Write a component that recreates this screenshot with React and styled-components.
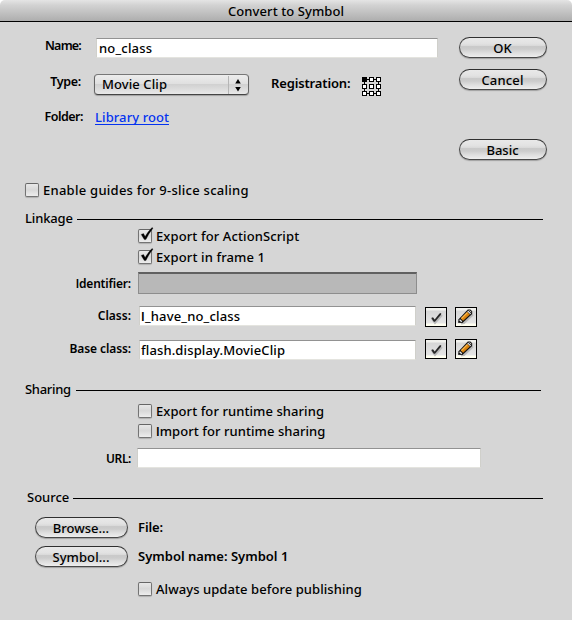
import React from 'react';
import styled, { createGlobalStyle } from 'styled-components';

const Global = createGlobalStyle`
  *, *::before, *::after { box-sizing: border-box; }
  body { margin: 0; background: #d6d6d6; }
`;

const Dialog = styled.main`
  width: 572px;
  height: 620px;
  overflow: hidden;
  background: #d6d6d6;
  color: #000;
  font-family: "Noto Sans", sans-serif;
  font-size: 13px;
  font-weight: 500;
  line-height: 16px;
`;

const TitleBar = styled.header`
  height: 22px;
  padding: 3px 0 0 228px;
  border-bottom: 1px solid #000;
  border-radius: 5px 5px 0 0;
  background: linear-gradient(#e4e4e4 0, #d2d2d2 25%, #c6c6c6 50%, #bababa 75%, #adadad 100%);
`;

const Corners = styled.div`
  background: #fff;
`;

const Text = styled.span`
  display: block;
  flex: none;
  white-space: nowrap;
  letter-spacing: ${p => p.$track || 0}px;
`;

const Stem = styled.span`
  font-family: Roboto, sans-serif;
  font-weight: 500;
`;

const Row = styled.div`
  display: flex;
  align-items: flex-start;
  height: ${p => p.$height}px;
  padding-left: ${p => p.$indent || 0}px;
`;

const TopArea = styled.section`
  display: grid;
  grid-template-columns: 459px 88px;
  height: 160px;
  padding-top: 15px;
`;

const Label = styled(Text)`
  width: ${p => p.$width}px;
  margin: ${p => p.$drop || 0}px ${p => p.$gap || 8}px 0 0;
  text-align: right;
  font-size: ${p => p.$size || 12}px;
  font-weight: 600;
`;

const Field = styled.div`
  flex: none;
  width: ${p => p.$width}px;
  height: 20px;
  margin-top: ${p => p.$drop || 0}px;
  padding: 1px 0 0 ${p => p.$inset || 1}px;
  border: 1px solid #d0d0cb;
  border-top-color: #929292;
  border-bottom-color: #e4e4df;
  background: #fff;
`;

const DisabledField = styled(Field)`
  height: 22px;
  border: 1px solid #8d8d8d;
  border-top: 2px solid #606060;
  background: #b8b8b8;
`;

const Select = styled.div`
  display: flex;
  flex: none;
  justify-content: space-between;
  width: 155px;
  height: 21px;
  padding: 1px 0 0 7px;
  border: 1px solid #666;
  border-top-color: #777;
  border-bottom-color: #444;
  border-radius: 4px;
  background: linear-gradient(#ededed 0, #e0e0e0 45%, #d1d1d1 50%, #e8e8e8 100%);
  box-shadow: 0 1px 1px rgba(0, 0, 0, 0.25);
`;

const Stepper = styled.div`
  width: 20px;
  height: 18px;
  border-left: 1px solid #b5b5b5;
  svg { display: block; margin: 2px 0 0 5px; }
`;

const RegistrationLabel = styled(Text)`
  width: 81px;
  margin: 1px 10px 0 22px;
  font-weight: 600;
`;

const RegistrationGrid = styled.svg`
  display: block;
  margin-top: 3px;
`;

const Link = styled.a`
  display: block;
  height: 16px;
  color: #0433f0;
  border-bottom: 1px solid #0433f0;
  letter-spacing: 0.09px;
  white-space: nowrap;
`;

const ButtonColumn = styled.div`
  display: flex;
  flex-direction: column;
`;

const PushButton = styled.button`
  flex: none;
  display: block;
  width: ${p => p.$width}px;
  height: 21px;
  margin: 0 0 ${p => p.$after || 0}px;
  padding: 0 1px 0 0;
  border: 1px solid #484848;
  border-top-color: #303030;
  border-radius: 11px;
  background: linear-gradient(#e9e9e9 0, #e2e2e2 30%, #dadada 40%, #c9c9c9 45%, #cccccc 58%, #dcdcdc 75%, #eeeeee 100%);
  box-shadow: 0 1px 1px rgba(0, 0, 0, 0.25);
  color: #000;
  font: inherit;
  line-height: 18px;
  letter-spacing: ${p => p.$track || 0}px;
`;

const Box = styled.span`
  flex: none;
  width: 14px;
  height: 14px;
  margin: 1px 4px 0 0;
  border: 1px solid #747474;
  border-top-color: #666;
  border-radius: 2px;
  background: linear-gradient(#e8e8e8, #d8d8d8 48%, #ededed);
  box-shadow: 0 1px 1px rgba(0, 0, 0, 0.18);
  svg { display: block; margin: -4px 0 0 0; overflow: visible; }
`;

const Legend = styled.div`
  display: flex;
  align-items: flex-start;
  height: ${p => p.$height}px;
  padding-left: ${p => p.$indent}px;
`;

const Rule = styled.span`
  width: ${p => p.$width}px;
  height: 1px;
  margin: 9px 0 0 auto;
  background: #000;
`;

const LegendInner = styled.div`
  display: flex;
  flex: none;
  width: ${p => p.$width}px;
`;

const IconButton = styled.button`
  flex: none;
  display: block;
  width: 22px;
  height: 20px;
  margin: ${p => p.$drop}px 0 0 8px;
  padding: 0;
  border: 1px solid #000;
  background: linear-gradient(#f1f1ed 0 2px, #d6d6d6 3px, #e5e5e5 15px, #fffff0 16px);
  svg { display: block; }
`;

const ToolGroup = styled.div`
  display: flex;
  margin-left: 1px;
`;

const FileText = styled(Text)`
  margin: 2px 0 0 10px;
  font-weight: 600;
`;

function CheckBox({ checked, track, children }) {
  return (
    <>
      <Box>
        {checked && (
          <svg width="14" height="16" viewBox="0 0 14 16">
            <path d="M2.2 8.4L4.5 7.6L6.1 10.6Q9.2 5.2 13 1.5L14 2.2Q9.9 7.2 6.9 13.6H5.3Z" fill="#000" stroke="#000" strokeWidth="0.3" />
          </svg>
        )}
      </Box>
      <Text $track={track}>{children}</Text>
    </>
  );
}

function Section({ title, track, indent, end, rule, height }) {
  return (
    <Legend $indent={indent} $height={height}>
      <LegendInner $width={end - indent}>
        <Text $track={track}>{title}</Text>
        <Rule $width={rule} />
      </LegendInner>
    </Legend>
  );
}

function ValidateIcon() {
  return (
    <svg width="20" height="18" viewBox="0 0 20 18">
      <path d="M6 11L9 15L16 7" fill="none" stroke="#bababa" strokeWidth="2" />
      <path d="M5.2 10L7 9.3L8.7 11.5L13.5 5.5L15.2 5L15 6.8L9 13.7H7.8Z" fill="#272727" />
    </svg>
  );
}

function PencilIcon() {
  return (
    <svg width="20" height="18" viewBox="0 0 20 18">
      <path d="M5 15.5L8 15L17 6.5" fill="none" stroke="#b9b9b9" strokeWidth="2" />
      <path d="M2 14.8L2.6 11.3L11.8 1.5H14.4L16.2 3.3V6L6.5 15Z" fill="#141414" />
      <path d="M4.8 10.6L11.3 3.9L13.9 6.4L7.1 12.7Z" fill="#d9820c" />
      <path d="M5.4 10.5L11.4 4.5" stroke="#ffb94a" strokeWidth="1.2" />
      <path d="M3.6 11.7L5.8 13.8" stroke="#eee" strokeWidth="1.2" />
      <path d="M11.7 3L14.7 5.9" stroke="#e4e4e4" strokeWidth="1.2" />
      <path d="M13.5 2.4L15.3 4.2" stroke="#d8d0c8" />
    </svg>
  );
}

function ClassTools({ drop }) {
  return (
    <ToolGroup>
      <IconButton $drop={drop} aria-label="Validate"><ValidateIcon /></IconButton>
      <IconButton $drop={drop} aria-label="Edit"><PencilIcon /></IconButton>
    </ToolGroup>
  );
}

const points = [1, 8, 15].flatMap(y => [1, 8, 15].map(x => [x, y]));

export default function App() {
  return (
    <Dialog>
      <Global />
      <Corners>
        <TitleBar><Text $track={0.08}>Convert to Symbol</Text></TitleBar>
      </Corners>

      <TopArea>
        <div>
          <Row $height={37}>
            <Label $width={81} $drop={1} $gap={15} $size={12.5} $track={-0.8}>Name:</Label>
            <Field $width={342} $inset={2} $drop={1}><Text $track={0.19}>no_class</Text></Field>
          </Row>
          <Row $height={35}>
            <Label $width={81} $gap={13} $size={12.5} $track={-0.3}>Type:</Label>
            <Select>
              <Text $track={0.09}>Movie Clip</Text>
              <Stepper>
                <svg width="8" height="14" viewBox="0 0 8 14">
                  <path d="M4 1L6.8 5.5H1.2ZM4 13.5L1.2 9H6.8Z" />
                </svg>
              </Stepper>
            </Select>
            <RegistrationLabel $track={-0.15}>Registration:</RegistrationLabel>
            <RegistrationGrid width="20" height="20" viewBox="0 0 20 20">
              <g fill="#fff" stroke="#000" shapeRendering="crispEdges">
                <rect x="2.5" y="2.5" width="14" height="14" fill="none" />
                {points.map(([x, y], i) => (
                  <rect key={i} x={x - 0.5} y={y - 0.5} width="4" height="4" fill={i ? '#fff' : '#000'} />
                ))}
              </g>
            </RegistrationGrid>
          </Row>
          <Row $height={30}>
            <Label $width={83} $gap={12} $size={12.5} $track={-0.5}>Folder:</Label>
            <Link>Library root</Link>
          </Row>
        </div>
        <ButtonColumn>
          <PushButton $width={88} $after={11}>OK</PushButton>
          <PushButton $width={88} $track={0.16} $after={49}>Cancel</PushButton>
          <PushButton $width={88}>Basic</PushButton>
        </ButtonColumn>
      </TopArea>

      <Row $indent={25} $height={28}><CheckBox track={0.26}>Enable guides for 9-slice scaling</CheckBox></Row>

      <Section title="Linkage" track={-0.15} indent={25} end={543} rule={466} height={18} />
      <Row $indent={138} $height={21}><CheckBox checked track={0.11}>Export for ActionScript</CheckBox></Row>
      <Row $indent={138} $height={23}><CheckBox checked track={0.12}>Export in frame 1</CheckBox></Row>
      <Row $height={33}>
        <Label $width={131} $gap={7} $drop={4} $track={-0.18}><Stem>I</Stem>dentifier:</Label>
        <DisabledField $width={279} />
      </Row>
      <Row $height={34}>
        <Label $width={131} $drop={3}>Class:</Label>
        <Field $width={277} $drop={1}><Text $track={0.18}><Stem>I</Stem>_have_no_class</Text></Field>
        <ClassTools drop={2} />
      </Row>
      <Row $height={42}>
        <Label $width={131} $drop={2} $track={-0.1}>Base class:</Label>
        <Field $width={277} $drop={1}><Text $track={0.13}>flash.display.MovieClip</Text></Field>
        <ClassTools drop={0} />
      </Row>

      <Section title="Sharing" track={-0.3} indent={25} end={541} rule={465} height={22} />
      <Row $indent={138} $height={20}><CheckBox track={0.07}>Export for runtime sharing</CheckBox></Row>
      <Row $indent={138} $height={25}><CheckBox track={0.06}><Stem>I</Stem>mport for runtime sharing</CheckBox></Row>
      <Row $height={41}>
        <Label $width={131} $gap={6} $drop={3} $track={-0.4}>URL:</Label>
        <Field $width={344} />
      </Row>

      <Section title="Source" indent={27} end={543} rule={470} height={28} />
      <Row $indent={35} $height={29}>
        <PushButton $width={93}>Browse...</PushButton>
        <FileText $track={-0.1}>File:</FileText>
      </Row>
      <Row $indent={35} $height={35}>
        <PushButton $width={93} $track={0.07}>Symbol...</PushButton>
        <FileText>Symbol name: Symbol 1</FileText>
      </Row>
      <Row $indent={138} $height={20}><CheckBox track={0.07}>Always update before publishing</CheckBox></Row>
    </Dialog>
  );
}
